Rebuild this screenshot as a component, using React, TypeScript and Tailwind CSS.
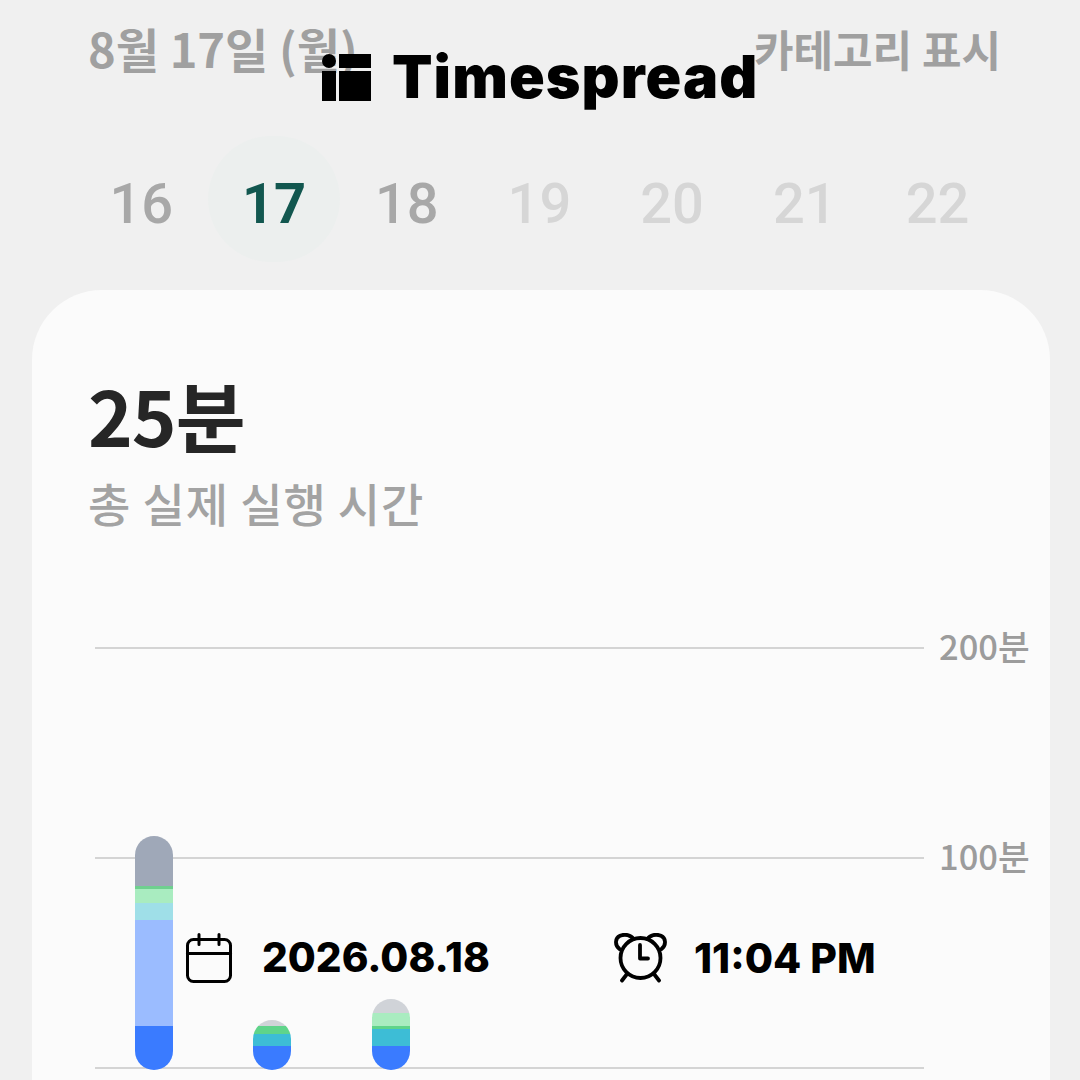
import React from 'react';

const KR = '[font-family:"Noto_Sans_CJK_KR","Noto_Sans",sans-serif]';

const days = [
  { n: 16, color: 'text-[#a8a8a8] font-medium' },
  { n: 17, color: 'text-[#12574f] font-bold', active: true },
  { n: 18, color: 'text-[#a8a8a8] font-medium' },
  { n: 19, color: 'text-[#d6d6d6] font-medium' },
  { n: 20, color: 'text-[#d6d6d6] font-medium' },
  { n: 21, color: 'text-[#d6d6d6] font-medium' },
  { n: 22, color: 'text-[#d6d6d6] font-medium' },
];

const bars = [
  {
    ml: 'ml-0',
    segments: [
      ['#9fa8b8', 50],
      ['#6fd08f', 3],
      ['#a9ecc0', 14],
      ['#9fdfe8', 17],
      ['#9bbcff', 106],
      ['#3a7bff', 44],
    ],
  },
  {
    ml: 'ml-[80px]',
    segments: [
      ['#d0d3d8', 6],
      ['#5fd48a', 8],
      ['#3dbdd6', 12],
      ['#3a7bff', 24],
    ],
  },
  {
    ml: 'ml-[81px]',
    segments: [
      ['#d0d3d8', 14],
      ['#a9ecc0', 13],
      ['#5fd48a', 3],
      ['#3dbdd6', 17],
      ['#3a7bff', 24],
    ],
  },
] as { ml: string; segments: [string, number][] }[];

const CalendarIcon = () => (
  <svg width="48" height="50" viewBox="0 0 48 50" fill="none" stroke="#000" strokeWidth="3" strokeLinecap="round" strokeLinejoin="round">
    <rect x="2.5" y="6.5" width="43" height="42" rx="6" />
    <path d="M2.5 20.5h43" />
    <path d="M14 1.500v10M34 1.500v10" />
  </svg>
);

const AlarmIcon = () => (
  <svg width="54" height="50" viewBox="0 0 54 50" fill="none" stroke="#000" strokeWidth="3.8" strokeLinecap="round" strokeLinejoin="round">
    <circle cx="26.500" cy="25" r="20" />
    <path d="M26 12v13.500h8" />
    <path d="M5.500 16C0.500 12 1 5 6 2.800s11-0.800 13.500 3.200" />
    <path d="M47.500 16C52.500 12 52 5 47 2.800s-11-0.800-13.500 3.200" />
    <path d="M13 41l-5 6.500M40 41l5 6.500" />
  </svg>
);

const GridLine = ({ label }: { label?: string }) => (
  <div className="flex items-center h-[2px]">
    <div className="w-[829px] h-[2px] bg-[#d4d4d4]" />
    {label && <span className={`ml-[15px] -translate-y-[2px] text-[34.5px] font-medium text-[#9c9c9c] whitespace-nowrap ${KR}`}>{label}</span>}
  </div>
);

export default function App() {
  return (
    <div className={`relative w-[1080px] h-[1080px] overflow-hidden bg-[#f0f0f0] ${KR}`}>
      <div className="flex justify-between pl-[88px] pr-[79px] pt-[18px] h-[136px]">
        <span className="text-[47px] leading-[60px] font-bold text-[#a0a0a0]">8월 17일 (월)</span>
        <span className="text-[43px] leading-[60px] font-bold text-[#a0a0a0]">카테고리 표시</span>
      </div>

      <div className="flex pl-[75px] h-[154px] items-start">
        {days.map(d => (
          <div
            key={d.n}
            className={`w-[132.7px] h-[126px] flex items-center justify-center rounded-full text-[56px] [font-family:Roboto,sans-serif] ${d.color} ${d.active ? 'bg-[#ecefee]' : ''}`}
          >
            <span className="translate-y-[5px]">{d.n}</span>
          </div>
        ))}
      </div>

      <div className="ml-[32px] w-[1018px] h-[800px] rounded-t-[70px] bg-[#fbfbfb] pl-[56px] pt-[86px]">
        <div className="text-[76px] leading-[76px] font-bold text-[#262626] tracking-[-1px]">25분</div>
        <div className="mt-[20px] text-[46px] leading-[60px] font-medium text-[#a3a3a3] tracking-[0.9px]">총 실제 실행 시간</div>

        <div className="relative ml-[7px] mt-[115px]">
          <div className="flex flex-col gap-[208px]">
            <GridLine label="200분" />
            <GridLine label="100분" />
            <GridLine />
          </div>
          <div className="absolute left-[40px] bottom-[-1px] flex items-end">
            {bars.map((b, i) => (
              <div key={i} className={`w-[38px] rounded-full overflow-hidden flex flex-col ${b.ml}`}>
                {b.segments.map(([color, h], j) => (
                  <div key={j} style={{ background: color, height: h }} />
                ))}
              </div>
            ))}
          </div>
        </div>
      </div>

      {/* watermark overlays */}
      <div className="absolute left-[322px] top-[44px] flex items-center gap-[21px] text-black">
        <div className="grid grid-cols-[14px_32px] grid-rows-[14px_30px] gap-[3px]">
          <div className="bg-black rounded-full" />
          <div className="bg-black" />
          <div className="bg-black" />
          <div className="bg-black" />
        </div>
        <span className="text-[59px] leading-[66px] font-black tracking-[1.1px] [font-family:Inter,sans-serif]">Timespread</span>
      </div>

      <div className="absolute left-[185px] top-[932px] flex items-center">
        <CalendarIcon />
        <span className="ml-[29px] w-[352px] text-[40.5px] leading-[52px] font-extrabold text-black [font-family:Inter,sans-serif]">2026.08.18</span>
        <AlarmIcon />
        <span className="ml-[26px] text-[41px] leading-[52px] font-extrabold text-black [font-family:Inter,sans-serif]">11:04 PM</span>
      </div>
    </div>
  );
}
